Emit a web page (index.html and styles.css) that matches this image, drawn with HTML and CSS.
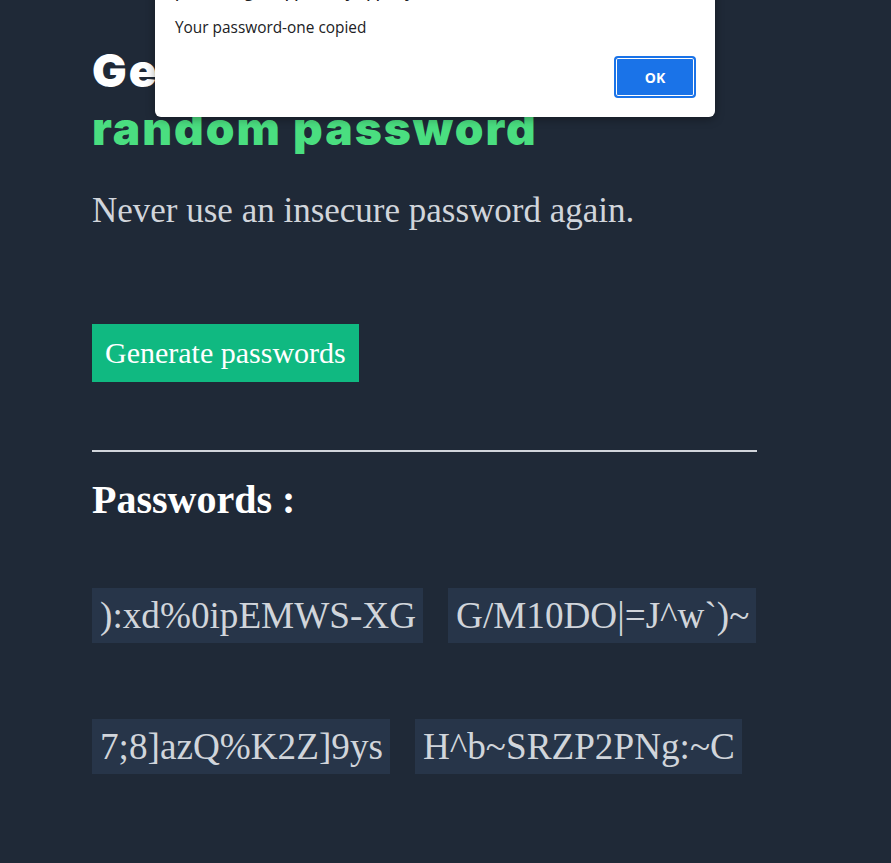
FILE: index.html
```html
<!DOCTYPE html>
<html lang="en">
<head>
<meta charset="utf-8">
<title>Password Generator</title>
<link rel="stylesheet" href="styles.css">
</head>
<body>
<main class="container">
  <h1 class="title">Generate a<span class="accent">random password</span></h1>
  <p class="subtitle">Never use an insecure password again.</p>
  <button class="generate-btn">Generate passwords</button>
  <hr class="divider">
  <h2 class="passwords-title">Passwords :</h2>
  <div class="password-row">
    <span class="password">):xd%0ipEMWS-XG</span>
    <span class="password">G/M10DO|=J^w`)~</span>
  </div>
  <div class="password-row">
    <span class="password">7;8]azQ%K2Z]9ys</span>
    <span class="password">H^b~SRZP2PNg:~C</span>
  </div>
</main>

<div class="alert" role="alertdialog">
  <div class="alert-title">passwordgen-app.netlify.app says</div>
  <div class="alert-message">Your password-one copied</div>
  <div class="alert-actions">
    <button class="alert-ok">OK</button>
  </div>
</div>
</body>
</html>
```
FILE: styles.css
```css
* { box-sizing: border-box; }

html, body {
  margin: 0;
  padding: 0;
  background: #1f2937;
  height: 100%;
}

body {
  font-family: "Liberation Serif", "Times New Roman", serif;
  color: #d1d5db;
  overflow: hidden;
}

.container {
  width: 757px;
  padding: 41px 0 0 92px;
}

.title {
  margin: 0;
  font-family: Inter, "Noto Sans", sans-serif;
  font-weight: 900;
  font-size: 46px;
  line-height: 58px;
  color: #ffffff;
  letter-spacing: 2px;
}

.accent {
  display: block;
  color: #4ade80;
}

.subtitle {
  margin: 34px 0 0;
  font-size: 35px;
  line-height: 40px;
}

.generate-btn {
  display: block;
  margin-top: 93px;
  height: 58px;
  padding: 0 13px;
  border: none;
  background: #10b981;
  color: #ffffff;
  font-family: "Liberation Serif", "Times New Roman", serif;
  font-size: 30px;
}

.divider {
  margin: 68px 0 0;
  border: none;
  border-top: 2px solid #d1d5db;
}

.passwords-title {
  margin: 25px 0 0;
  font-size: 40px;
  line-height: 46px;
  font-weight: bold;
  color: #ffffff;
}

.password-row {
  display: flex;
  gap: 25px;
  margin-top: 65px;
}

.password-row + .password-row {
  margin-top: 76px;
}

.password {
  display: block;
  height: 55px;
  line-height: 55px;
  padding: 0 7px 0 8px;
  background: #273549;
  font-size: 37.2px;
  color: #d1d5db;
  white-space: nowrap;
}

/* Browser alert dialog overlay */
.alert {
  position: absolute;
  left: 155px;
  top: -36px;
  width: 560px;
  height: 153px;
  background: #ffffff;
  border-radius: 0 0 6px 6px;
  box-shadow: 0 2px 10px rgba(0, 0, 0, 0.35);
  padding: 18px 20px 0 20px;
  font-family: "Open Sans", "Noto Sans", sans-serif;
  color: #202124;
}

.alert-title {
  font-size: 15px;
  font-weight: 600;
  line-height: 20px;
  height: 20px;
}

.alert-message {
  margin-top: 16px;
  font-size: 15.4px;
  line-height: 20px;
}

.alert-actions {
  display: flex;
  justify-content: flex-end;
  margin-top: 18px;
}

.alert-ok {
  width: 82px;
  height: 42px;
  border-radius: 4px;
  background: #1a73e8;
  color: #ffffff;
  border: 2px solid #1a73e8;
  box-shadow: inset 0 0 0 1px #ffffff;
  font-family: "Open Sans", "Noto Sans", sans-serif;
  font-weight: 700;
  font-size: 14px;
  margin-right: -1px;
}
```
